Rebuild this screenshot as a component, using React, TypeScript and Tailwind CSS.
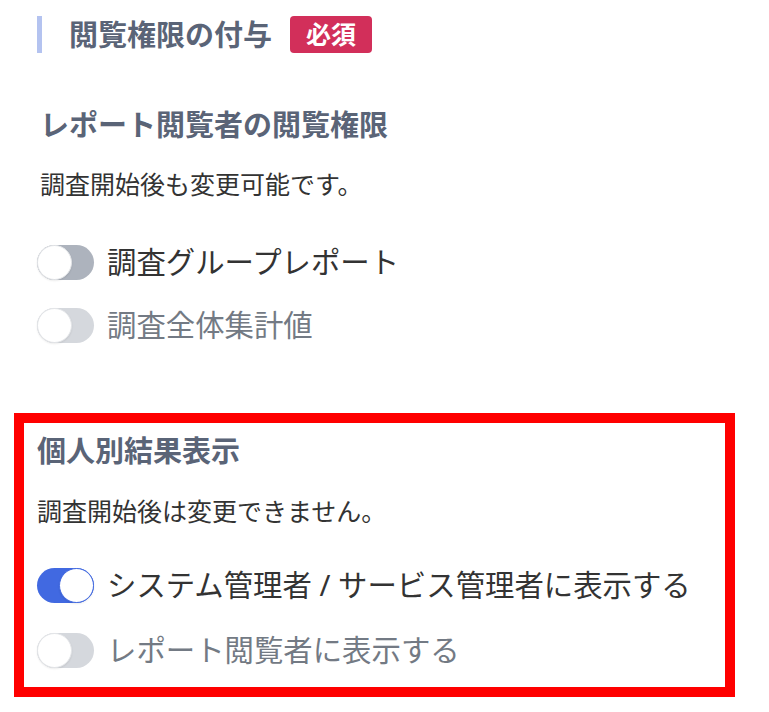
import React from 'react';

const font = { fontFamily: '"Noto Sans", "Noto Sans CJK JP", sans-serif' };

type ToggleProps = { on?: boolean; disabled?: boolean; label: string };

function Toggle({ on = false, disabled = false, label }: ToggleProps) {
  const track = on ? 'bg-[#4169e1]' : disabled ? 'bg-[#d5d8dd]' : 'bg-[#adb3bd]';
  return (
    <div className="flex items-center h-[40px]">
      <div className={`relative w-[57px] h-[35px] rounded-full ${track}`}>
        <div
          className={`absolute top-0 w-[35px] h-[35px] rounded-full bg-white border ${
            on ? 'right-0 border-[#4169e1]' : 'left-0 border-[#e3e5e8]'
          } shadow-[0_1px_2px_rgba(0,0,0,0.08)]`}
        />
      </div>
      <span className={`ml-[13px] text-[29.4px] leading-[40px] ${disabled ? 'text-[#737a84]' : 'text-[#333333]'}`}>
        {label}
      </span>
    </div>
  );
}

export default function App() {
  return (
    <div className="w-[769px] h-[712px] bg-white overflow-hidden" style={font}>
      <div className="pt-[16px] pl-[37px]">
        {/* ─── section title ─── */}
        <div className="flex items-center h-[37px]">
          <div className="w-[5px] h-full bg-[#b4c3f0]" />
          <h2 className="ml-[27px] text-[29px] font-bold text-[#5a6477] leading-[37px]">閲覧権限の付与</h2>
          <span className="ml-[18px] h-[37px] px-[16px] rounded-[4px] bg-[#d22f5a] text-white text-[25px] font-bold leading-[37px]">
            必須
          </span>
        </div>

        {/* ─── report viewer permissions ─── */}
        <h3 className="mt-[51px] pl-[3px] text-[29px] font-bold text-[#5a6477] leading-[42px]">レポート閲覧者の閲覧権限</h3>
        <p className="mt-[21px] pl-[3px] text-[25px] text-[#333333] leading-[34px]">調査開始後も変更可能です。</p>
        <div className="mt-[41px] flex flex-col gap-[23px]">
          <Toggle label="調査グループレポート" />
          <Toggle label="調査全体集計値" disabled />
        </div>
      </div>

      {/* ─── individual results ─── */}
      <div className="mt-[68px] ml-[14px] w-[721px] border-[10px] border-[#ff0000] pl-[13px] pt-[7px] pb-[17px]">
        <h3 className="text-[29px] font-bold text-[#5a6477] leading-[42px]">個人別結果表示</h3>
        <p className="mt-[22px] text-[25px] text-[#333333] leading-[34px]">調査開始後は変更できません。</p>
        <div className="mt-[37px] flex flex-col gap-[25px]">
          <Toggle label="システム管理者 / サービス管理者に表示する" on />
          <Toggle label="レポート閲覧者に表示する" disabled />
        </div>
      </div>
    </div>
  );
}
